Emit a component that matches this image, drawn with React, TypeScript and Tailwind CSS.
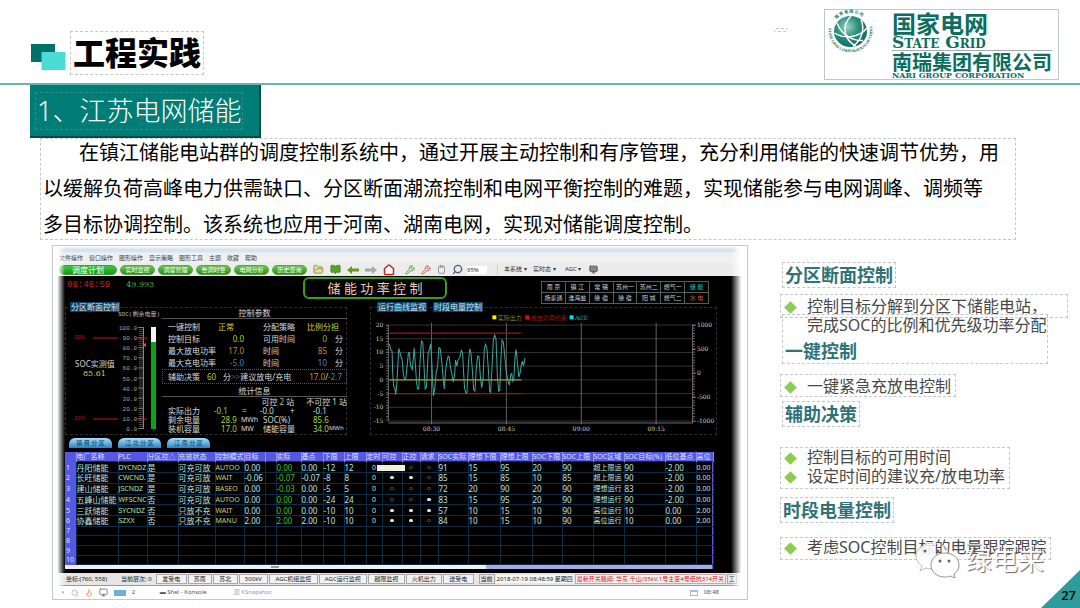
import type { ReactNode } from "react"
import { BookOpen, FolderOpen, House, Monitor, Search, Flame, Clipboard, Wrench } from "lucide-react"

const menuItems = ["文件操作", "窗口操作", "图形操作", "显示策略", "图形工具", "主题", "收藏", "帮助"]
const pills = ["实时监视", "调度管理", "告调时警", "电网分析", "历史查询"]

const stations = [
  ["南 京", "镇 江", "常 锡", "苏州一", "苏州二", "燃气一", "储 能"],
  ["扬泰通", "淮海盐", "徐 宿", "徐 宿", "阳 城", "燃气二", "水 电"],
]

const params = [
  { label: "一键控制", value: "正常", color: "text-[#c8d23c]", label2: "分配策略", value2: "比例分担", unit: "", color2: "text-[#c8d23c]" },
  { label: "控制目标", value: "0.0", color: "text-[#a8d23c]", label2: "可用时间", value2: "0", unit: "分", color2: "text-[#7cc832]" },
  { label: "最大放电功率", value: "17.0", color: "text-[#d8862c]", label2: "时间", value2: "85", unit: "分", color2: "text-[#d8862c]" },
  { label: "最大充电功率", value: "-5.0", color: "text-[#2f86d0]", label2: "时间", value2: "10", unit: "分", color2: "text-[#4a7ee0]" },
]

const columns = [
  { name: "", width: "w-[11px]" },
  { name: "电厂名称", width: "w-[42px]" },
  { name: "PLC", width: "w-[29px]" },
  { name: "分区控△", width: "w-[31px]" },
  { name: "充放状态", width: "w-[37px]" },
  { name: "控制模式", width: "w-[29px]" },
  { name: "目标", width: "w-[21px]" },
  { name: "", width: "w-[11px]" },
  { name: "实际", width: "w-[25px]" },
  { name: "基点", width: "w-[22px]" },
  { name: "下限", width: "w-[21px]" },
  { name: "上限", width: "w-[22px]" },
  { name: "定时", width: "w-[16px]" },
  { name: "可控", width: "w-[20px]" },
  { name: "正控", width: "w-[18px]" },
  { name: "请求", width: "w-[18px]" },
  { name: "SOC实际", width: "w-[30px]" },
  { name: "理想下限", width: "w-[32px]" },
  { name: "理想上限", width: "w-[32px]" },
  { name: "SOC下限", width: "w-[30px]" },
  { name: "SOC上限", width: "w-[31px]" },
  { name: "SOC区域", width: "w-[31px]" },
  { name: "SOC目标(%)", width: "w-[41px]" },
  { name: "低位基点", width: "w-[31px]" },
  { name: "高位", width: "w-[17px]" },
]

const plants = [
  ["丹阳储能", "DYCNDZ", "是", "可充可放", "AUTOO", "0.00", "", "0.00", "0.00", "-12", "12", "0", "○", "○", "○", "91", "15", "95", "20", "90", "超上限运", "90", "-2.00", "0.00"],
  ["长旺储能", "CWCND.", "是", "可充可放", "WAIT", "-0.06", "", "-0.07", "-0.07", "-8", "8", "0", "●", "●", "○", "85", "15", "85", "10", "85", "超上限运", "90", "-2.00", "0.00"],
  ["建山储能", "JSCNDZ", "是", "可充可放", "BASEO", "0.00", "", "-0.03", "0.00", "-5", "5", "0", "○", "○", "○", "72", "20", "90", "20", "90", "理想运行", "83", "-2.00", "0.00"],
  ["五峰山储能", "WFSCNC", "否", "可充可放", "AUTOO", "0.00", "", "0.00", "0.00", "-24", "24", "0", "○", "○", "●", "83", "15", "95", "20", "90", "理想运行", "90", "-2.00", "0.00"],
  ["三跃储能", "SYCNDZ", "否", "只放不充", "WAIT", "0.00", "", "0.00", "0.00", "-10", "10", "0", "●", "●", "●", "57", "10", "15", "10", "90", "高位运行", "10", "0.00", "2.00"],
  ["协鑫储能", "SZXX", "否", "只放不充", "MANU", "2.00", "", "2.00", "2.00", "-10", "10", "0", "●", "●", "○", "84", "10", "15", "10", "90", "高位运行", "10", "0.00", "2.00"],
]

const wave =
  "88,133 92,150 96,155 98,225 101,262 104,265 107,285 110,255 113,200 116,147 120,160 123,172 126,180 130,225 133,240 137,238 141,200 145,160 148,160 151,198 156,210 159,185 162,145 166,200 169,245 172,268 176,268 180,180 184,125 188,130 192,210 195,268 199,262 204,160 208,150 211,133 214,170 217,240 220,289 224,262 228,220 232,200 236,145 240,148 244,180 248,225 252,268 256,215 260,185 264,170 267,173 271,205 275,225 279,248 283,225 286,182 290,200 293,182 298,176 303,153 307,160 310,220 313,268 317,280 320,278 324,200 328,148 332,160 336,210 340,270 344,275 348,205 352,170 356,172 360,230 364,265 368,240 372,145 376,135 380,150 384,210 388,275 391,278 395,200 399,120 403,107 407,120 411,230 415,275 418,272 422,170 425,122 429,128 434,180 438,220 443,245 447,257 451,225 454,222 457,245 460,240 464,170 467,150 471,190 475,233 479,220 483,195 486,185 489,200 494,175"

const cellStyle = (col: number) => {
  if (col === 1) return "text-[7px] text-[#b4e6a4]"
  if (col === 4) return "text-[7px] text-[#dccb6c]"
  if (col === 7) return "text-[#3cc028]"
  if (col === 20 || col === 23) return "text-[7px] text-[#bfe4e0]"
  if (col >= 11 && col <= 14) return "text-center text-[7px] text-[#bfe4e0]"
  return "text-[#bfe4e0]"
}

function StateGridLogo() {
  return (
    <div className="flex h-[71px] w-[235px] gap-4 border border-[#c2c6d2] bg-white pl-px">
      <svg viewBox="0 0 50 50" className="-mt-1 size-[50px] shrink-0">
        <defs>
          <radialGradient id="globe" cx="0.4" cy="0.35" r="0.75">
            <stop offset="0" stopColor="#9fd3c6" />
            <stop offset="0.45" stopColor="#2b8f7f" />
            <stop offset="1" stopColor="#0b6459" />
          </radialGradient>
          <path id="arcTop" d="M8.500 15.500 A18.500 17.500 0 0 1 40.500 15.500" />
          <path id="arcBottom" d="M4 17 A22 21.500 0 1 0 45 17" />
        </defs>
        <ellipse cx="24.500" cy="25.500" rx="16.500" ry="15.500" fill="url(#globe)" />
        <g fill="none" stroke="#fff" strokeWidth="1.4">
          <path d="M8.500 27 C18 33 33 32 41 22" />
          <path d="M25 10 C15 20 18 34 30 40" />
          <path d="M11 17 C16 30 28 35 37 34.500" />
          <path d="M35 14 C39 22 36 34 27 40.500" />
        </g>
        <text fontSize="4" fontWeight="bold" fill="#0b6e60" fontFamily="Noto Sans CJK SC, sans-serif">
          <textPath href="#arcTop" startOffset="3">国 家 电 网 公 司</textPath>
        </text>
        <text fontSize="4" fontWeight="bold" fill="#0b6e60" fontFamily="Liberation Serif, serif">
          <textPath href="#arcBottom" startOffset="5">STATE GRID CORPORATION OF CHINA</textPath>
        </text>
      </svg>
      <div className="flex flex-col text-[#0b6e60]">
        <span className="mt-0.5 text-[24px] leading-[24px] font-bold">国家电网</span>
        <span className="font-['DejaVu_Serif',serif] text-[17px] leading-[13px] font-bold [font-variant:small-caps]">State Grid</span>
        <span className="mb-[3px] h-0.5 border-b border-[#a8acb0]" />
        <span className="text-[20px] leading-[18px] font-bold">南瑞集团有限公司</span>
        <span className="font-['DejaVu_Serif',serif] text-[8px] leading-[6px] font-bold whitespace-nowrap">NARI GROUP CORPORATION</span>
      </div>
    </div>
  )
}

function SocGauge() {
  const ticks = Array.from({ length: 11 }, (_, i) => i)
  return (
    <svg viewBox="0 0 96 124" className="h-[124px] w-24 shrink-0" fontFamily="Noto Sans, Noto Sans CJK SC, sans-serif">
      <text x="52" y="8" fontSize="6" fill="#b4b4b4" fontFamily="Liberation Mono, Noto Sans CJK SC">SOC(剩余电量)</text>
      {ticks.map((t) => (
        <g key={t}>
          <text x="71" y={22 + t * 10.1} fontSize="6" textAnchor="end" fill="#a6a6a6" fontFamily="Liberation Mono">
            {(100 - t * 10).toFixed(1)}
          </text>
          <path d={`M72 ${19.5 + t * 10.1}h5`} stroke="#aaa" strokeWidth="0.7" />
        </g>
      ))}
      {Array.from({ length: 51 }, (_, i) => (
        <path key={i} d={`M73 ${19.5 + i * 2.02}h4`} stroke="#777" strokeWidth="0.6" />
      ))}
      <path d="M77.500 19v102" stroke="#aaa" strokeWidth="0.8" />
      <g stroke="#c01818" strokeWidth="1">
        <path d="M27 30h25M71 30h10M27 111h25M71 111h10" />
      </g>
      <path d="M80 35l-4 2 4 2z" fill="#e0502c" />
      <text x="8" y="31" fontSize="6" fill="#b01414" fontFamily="Liberation Mono">90%</text>
      <text x="8" y="112" fontSize="6" fill="#b01414" fontFamily="Liberation Mono">10%</text>
      <rect x="85" y="19" width="5" height="15" fill="#f4f4f4" />
      <rect x="85" y="34" width="5" height="87" fill="#0aa414" />
      <text x="9" y="59" fontSize="8" fill="#d0d4d4">SOC实测值</text>
      <text x="17" y="68" fontSize="8" fill="#b8d860" fontFamily="DejaVu Serif">85.61</text>
    </svg>
  )
}

function PowerChart() {
  const left = [20, 15, 10, 5, 0, -5, -10, -15]
  const right = [1000, 500, 0, -500, -1000]
  const times = ["08:30", "08:45", "09:00", "09:15"]
  return (
    <svg viewBox="33 38 1032 366" className="w-full" fontFamily="DejaVu Serif, Noto Sans CJK SC, serif" fontSize="18">
      <rect x="396" y="48" width="12" height="12" fill="#ffee00" />
      <text x="412" y="61" fontSize="18" fill="#8c8420">实际出力</text>
      <rect x="494" y="48" width="12" height="12" fill="#f00000" />
      <text x="511" y="61" fontSize="18" fill="#981818">充放功率约束</text>
      <rect x="627" y="48" width="12" height="12" fill="#00e4f0" />
      <text x="643" y="61" fill="#00ccd8">ACE</text>
      {left.map((v, i) => (
        <g key={v}>
          <path d={`M76 ${77 + i * 41}H995`} stroke="#4c4c4c" strokeWidth="2" />
          <text x="70" y={83 + i * 41} textAnchor="end" fill="#d0d0d0">{v}</text>
        </g>
      ))}
      {times.map((t, i) => (
        <g key={t}>
          <path d={`M${214 + i * 224} 70V374`} stroke="#606060" strokeWidth="3" />
          <text x={214 + i * 224} y="394" textAnchor="middle" fill="#d0d0d0">{t}</text>
        </g>
      ))}
      {right.map((v, i) => (
        <g key={v}>
          <path d={`M995 ${77 + i * 72}h10`} stroke="#aaa" strokeWidth="2" />
          <text x="1008" y={83 + i * 72} fill="#d0d0d0">{v}</text>
        </g>
      ))}
      <path d="M85 77V364M995 77V370M85 370H995" stroke="#a0a0a0" strokeWidth="2" fill="none" />
      <path d="M81 77V364M999 77V364" stroke="#a0a0a0" strokeWidth="5" strokeDasharray="2 6" />
      <path d="M88 101H483M88 282H483" stroke="#9c1616" strokeWidth="4" />
      <polyline points={wave} fill="none" stroke="#3aa8a0" strokeWidth="3" />
      <path d="M88 241H483" stroke="#a0a020" strokeWidth="4" />
    </svg>
  )
}

function PanelTag({ children }: { children: ReactNode }) {
  return <span className="bg-[#0c4468] px-px text-[8px] leading-[10px] text-[#d8e8f0]">{children}</span>
}

function Parameters() {
  return (
    <div className="flex flex-1 flex-col pr-1.5 text-[8px] whitespace-nowrap text-[#d4dcdc]">
      <h3 className="border-b border-[#555] text-center leading-[10px]">控制参数</h3>
      <div className="pt-0.5 pl-1.5">
        {params.map((p) => (
          <div key={p.label} className="flex leading-3">
            <span className="w-[50px]">{p.label}</span>
            <span className={`w-[26px] ${p.unit ? "text-right" : ""} ${p.color}`}>{p.value}</span>
            <span className="ml-[19px] w-[44px]">{p.label2}</span>
            <span className={`${p.unit ? "w-5 text-right" : ""} ${p.color2}`}>{p.value2}</span>
            <span className="ml-2">{p.unit}</span>
          </div>
        ))}
      </div>
      <div className="flex border border-dotted border-[#555] pr-1 pl-[5px] leading-[13px]">
        <span className="w-[39px]">辅助决策</span>
        <span className="w-4 text-[#a8d23c]">60</span>
        <span>分<b className="font-normal text-[#2f66b0]">&gt;&gt;</b>建议放电/充电</span>
        <span className="ml-auto text-[#d8862c]">17.0<b className="font-normal text-[#d4dcdc]">/</b><b className="font-normal text-[#2f86d0]">-2.7</b></span>
      </div>
      <h3 className="mt-0.5 border-b border-[#555] text-center leading-[10px]">统计信息</h3>
      <div className="pl-1.5 leading-[9px]">
        <div className="flex justify-end gap-3">
          <span>可控 <b className="font-normal text-[#a8d23c]">2</b> 站</span>
          <span>不可控 1 站</span>
        </div>
        <div className="flex">
          <span className="w-[46px]">实际出力</span>
          <span className="w-[28px] text-[#a8d23c]">-0.1</span>
          <span className="w-[18px]">=</span>
          <span className="w-[30px] text-[#b8e0d0]">-0.0</span>
          <span className="w-[23px]">+</span>
          <span className="text-[#b8e0d0]">-0.1</span>
        </div>
        <div className="flex">
          <span className="w-[53px]">剩余电量</span>
          <span className="w-5 text-[#a8d23c]">28.9</span>
          <span className="w-[22px] text-[7px]">MWh</span>
          <span className="w-[50px]">SOC(%)</span>
          <span className="text-[#a8d23c]">85.6</span>
        </div>
        <div className="flex">
          <span className="w-[53px]">装机容量</span>
          <span className="w-5 text-[#a8d23c]">17.0</span>
          <span className="w-[22px] text-[7px]">MW</span>
          <span className="w-[50px]">储能容量</span>
          <span className="text-[#a8d23c]">34.0</span>
          <span className="text-[6px]">MWh</span>
        </div>
      </div>
    </div>
  )
}

function PlantTable() {
  return (
    <div className="relative mr-1 border-r border-[#5a5ae0]">
      <table className="h-[113px] w-full table-fixed border-collapse text-[8px] leading-[9px] whitespace-nowrap">
        <thead>
          <tr className="bg-[#5458e4] text-[7px] text-[#dfe4ff]">
            {columns.map((c, i) => (
              <th key={i} className={`border-r border-[#8a8cf4] p-0 text-left font-normal ${c.width}`}>{c.name}</th>
            ))}
          </tr>
        </thead>
        <tbody>
          {Array.from({ length: 10 }, (_, row) => (
            <tr key={row}>
              <td className="bg-[#5458e4] p-0 pl-px text-[7px] text-[#dfe4ff]">{row + 1}</td>
              {columns.slice(1).map((_, col) => (
                <td key={col} className={`border border-[#0d2c44] p-0 ${cellStyle(col)}`}>
                  {plants[row]?.[col] === "●" || plants[row]?.[col] === "○" ? (
                    <i className={`mx-auto block h-[3px] w-1 rounded-full ${plants[row][col] === "●" ? "bg-[#c8f4ec]" : "border border-[#555]"}`} />
                  ) : (
                    plants[row]?.[col]
                  )}
                </td>
              ))}
            </tr>
          ))}
        </tbody>
      </table>
      <div className="absolute top-[13px] left-[312px] h-1.5 w-7 bg-[#eef2d8]" />
      <div className="flex h-1 bg-[#a8aae4]">
        <div className="flex w-[65%] items-center justify-center bg-[#f0f0f4]">
          <span className="h-0.5 w-2 bg-[#999]" />
        </div>
      </div>
    </div>
  )
}

function Toolbar() {
  return (
    <div className="flex h-[13px] items-center overflow-hidden bg-[#ececec] pl-1.5 text-[6px] whitespace-nowrap text-[#333]">
      <button className="h-[10px] w-[58px] rounded-full border border-[#4a9a34] bg-linear-to-b from-[#3cc83c] to-[#109a1c] text-[8px] leading-[8px] text-white">调度计划</button>
      {pills.map((p) => (
        <button key={p} className="ml-[3px] h-[10px] w-[35px] rounded-full border border-[#58a840] bg-linear-to-b from-[#6cc850] to-[#2c8c20] text-[6px] leading-[8px] text-white">{p}</button>
      ))}
      <div className="ml-1.5 flex items-center gap-1.5">
        <FolderOpen size={11} className="fill-[#e8dca0] text-[#8a9448]" />
        <BookOpen size={11} className="fill-[#54a030] text-[#4c8c2c]" />
        <svg viewBox="0 0 12 10" className="h-2.5 w-3"><path d="M0 5l5-4v2.500h7v3H5V9z" fill="#6a9a1c" /></svg>
        <svg viewBox="0 0 12 10" className="h-2.5 w-3"><path d="M12 5L7 1v2.500H0v3h7V9z" fill="#a4a8a8" /></svg>
        <House size={12} className="fill-white text-[#c02424]" strokeWidth={3} />
      </div>
      <div className="ml-2.5 flex items-center gap-1.5">
        <Wrench size={10} className="text-[#4c8c3c]" />
        <Wrench size={10} className="text-[#b04c4c]" />
        <Clipboard size={9} className="text-[#777]" />
        <Search size={11} className="-scale-x-100 text-[#50607c]" strokeWidth={3} />
      </div>
      <select aria-label="缩放" className="ml-1 h-2 w-5 appearance-none bg-white text-[6px] leading-[8px]"><option>95%</option></select>
      <span className="ml-2.5 h-2.5 border-l border-[#ccc]" />
      <select aria-label="系统" className="ml-1.5 h-2.5 w-7 appearance-none text-[6px]"><option>本系统 ▾</option></select>
      <select aria-label="状态" className="ml-px h-2.5 w-7 appearance-none text-[6px]"><option>实时态 ▾</option></select>
      <select aria-label="应用" className="ml-1 h-2.5 w-6 appearance-none text-[6px]"><option>AGC ▾</option></select>
      <Monitor size={9} className="fill-[#888] text-[#444]" />
    </div>
  )
}

function StatusBar() {
  const buttons = ["发受电", "苏南", "苏北", "500kV", "AGC机组监控", "AGC运行监视", "越限监视", "火机出力", "送受电"]
  return (
    <div className="flex h-[13px] items-center gap-px overflow-hidden border-b border-[#7f9fb4] bg-[#e6e6e6] pr-2.5 pl-[13px] text-[6px] leading-[8px] whitespace-nowrap text-[#222]">
      <span className="w-[54px]">坐标:(760, 558)</span>
      <span className="w-[34px]">当前层次: 0</span>
      {buttons.map((b) => (
        <button key={b} className="min-w-[22px] grow border border-[#aaa] bg-[#f2f2f2] leading-[8px]">{b}</button>
      ))}
      <span className="ml-1 border border-[#aaa] px-px">当前</span>
      <span className="shrink-0 bg-[#f6f6f6] px-px">2018-07-19 08:48:59 星期四</span>
      <span className="shrink-0 border border-[#c8a8a8] bg-[#f8f0f0] px-px text-[#d02020]">最新开关跳闸: 华东.千山/35kV.1号主变4号低抗314开关</span>
      <button className="w-2.5 shrink-0 border border-[#aaa] leading-[8px]">工</button>
    </div>
  )
}

function ControlScreen() {
  return (
    <section className="relative min-w-0 flex-1 overflow-hidden border border-[#c4c8d4] bg-white">
      <div className="h-2 bg-linear-to-b from-white via-[#cfe0ee] to-[#eef2f4]" />
      <nav className="flex h-[9px] gap-1.5 bg-[#f0f0f0] pl-1.5 text-[6px] leading-[8px] text-[#444]">
        {menuItems.map((m) => <span key={m}>{m}</span>)}
      </nav>
      <Toolbar />
      <div className="bg-black pr-[30px] pb-1 pl-3">
        <div className="flex h-[26px] items-start pt-px">
          <div className="flex w-[238px] gap-4 pt-0.5 pl-0.5 leading-3">
            <span className="font-['Liberation_Mono',monospace] text-[9px] text-[#d01c1c]">08:48:59</span>
            <span className="font-['DejaVu_Serif',serif] text-[8px] text-[#44b43c]">49.993</span>
          </div>
          <h2 className="h-[22px] w-[144px] rounded-md border-2 border-[#3c9c1c] text-center text-[13px] leading-[18px] text-[#e8ccb8]">储 能 功 率 控 制</h2>
          <table className="mt-1 mr-2 ml-auto w-[168px] table-fixed border-collapse text-center text-[6px] leading-[10px] whitespace-nowrap text-[#ccd4d0]">
            <tbody>
              {stations.map((row, i) => (
                <tr key={i}>
                  {row.map((s, j) => (
                    <td key={j} className={`border border-[#4c6458] p-0 ${j === 6 ? (i === 0 ? "text-[#20c8c8]" : "text-[#d05020]") : ""}`}>{s}</td>
                  ))}
                </tr>
              ))}
            </tbody>
          </table>
        </div>
        <div className="flex gap-[23px] pt-[5px]">
          <div className="relative flex w-[282px] border border-dashed border-[#2c2c2c]">
            <div className="absolute -top-1.5 left-1 flex"><PanelTag>分区断面控制</PanelTag></div>
            <SocGauge />
            <Parameters />
          </div>
          <div className="relative flex-1 border border-dashed border-[#2c2c2c] pt-1">
            <div className="absolute -top-1.5 left-1.5 flex gap-1.5"><PanelTag>运行曲线监视</PanelTag><PanelTag>时段电量控制</PanelTag></div>
            <PowerChart />
          </div>
        </div>
        <div className="flex gap-1.5 pt-[3px] pb-1 pl-1">
          {["镇 晋 分 区", "江 北 分 区", "江 南 分 区"].map((t) => (
            <button key={t} className="h-[10px] w-[43px] rounded-t-md bg-linear-to-b from-[#a8e0f8] to-[#1c84c4] text-[6px] leading-[10px] text-[#0c3c68]">{t}</button>
          ))}
        </div>
        <PlantTable />
      </div>
      <StatusBar />
      <div className="flex h-[13px] items-center gap-1.5 pr-7 pl-2 text-[6px] text-[#555]">
        <span className="text-[#4c7cd0]">◖</span>
        <Search size={8} className="text-[#7cb0d8]" />
        <Flame size={8} className="text-[#f07030]" />
        <Monitor size={9} className="text-[#666]" />
        <span className="h-1.5 w-3 bg-[#6cb0d4]" />
        <span className="w-[22px]">2</span>
        <span className="w-[68px]">▬ Shel - Konsole</span>
        <span className="text-[#999]">▨ KSnapshot</span>
        <span className="ml-auto h-1.5 w-2 border border-t-2 border-[#9cc0dc]" />
        <span>08:48</span>
      </div>
      <div className="pointer-events-none absolute inset-y-0 left-0 w-3 bg-linear-to-r from-white from-35% to-transparent" />
      <div className="pointer-events-none absolute inset-y-0 right-0 w-4 bg-linear-to-l from-white from-35% to-transparent" />
    </section>
  )
}

const frame = "w-fit border border-dashed border-[#c4c8d0]"
const heading = "text-[18px] leading-[24px] font-bold text-[#2f7278]"

function Bullet({ children }: { children: ReactNode }) {
  return (
    <li className="flex gap-[11px]">
      <span className="mt-1 ml-[3px] flex size-3 shrink-0 items-center justify-center">
        <span className="size-[9px] rotate-45 bg-[#8ccc50]" />
      </span>
      <span>{children}</span>
    </li>
  )
}

function Features() {
  return (
    <aside className="w-[288px] shrink-0 pt-[17px] text-[16px] leading-[19px] whitespace-nowrap text-[#484848]">
      <div className={`ml-0.5 px-0.5 ${frame}`}><h2 className={heading}>分区断面控制</h2></div>
      <ul className="mt-1.5 h-6 border border-dashed border-[#c4c8d0] pt-0.5">
        <Bullet>控制目标分解到分区下储能电站，<br />完成SOC的比例和优先级功率分配</Bullet>
      </ul>
      <div className="-mt-1 mr-5 ml-0.5 flex h-[50px] items-end border border-dashed border-[#c4c8d0] px-0.5"><h2 className={heading}>一键控制</h2></div>
      <ul className={`mt-2.5 pt-0.5 pr-1 ${frame}`}>
        <Bullet>一键紧急充放电控制</Bullet>
      </ul>
      <div className={`mt-1 ml-0.5 px-0.5 ${frame}`}><h2 className={heading}>辅助决策</h2></div>
      <ul className={`mt-5 pr-1 pb-0.5 ${frame}`}>
        <Bullet>控制目标的可用时间</Bullet>
        <Bullet>设定时间的建议充/放电功率</Bullet>
      </ul>
      <div className={`mt-2 px-0.5 ${frame}`}><h2 className={heading}>时段电量控制</h2></div>
      <div className="relative mt-3.5 w-fit">
        <ul className={`pr-1 pb-0.5 ${frame}`}>
          <Bullet>考虑SOC控制目标的电量跟踪跟踪</Bullet>
        </ul>
        <div className="absolute top-1 left-[134px] flex items-center gap-1">
          <svg viewBox="0 0 48 38" className="h-[38px] w-12">
            <path d="M19 2C9 2 2 8 2 15c0 4 3 8 6 10l-2 5 6-3c3 1 7 1 10 0" fill="#fff" fillOpacity="0.85" stroke="#aaa" strokeWidth="0.8" />
            <path d="M19 2c8 0 15 5 16 12" fill="none" stroke="#ddd" strokeWidth="0.8" />
            <path d="M31 12c-8 0-14 5-14 12s6 12 14 12c2 0 3 0 5-1l5 2-1-4c3-2 5-5 5-9 0-7-6-12-14-12z" fill="#fff" stroke="#888" strokeWidth="0.9" />
            <g fill="#666"><circle cx="11" cy="10" r="1.500" /><circle cx="24" cy="10" r="1.500" /><circle cx="26" cy="20" r="1.500" /><circle cx="35" cy="20" r="1.500" /></g>
          </svg>
          <span className="text-[26px] leading-[32px] text-white [text-shadow:1px_1px_1px_#666]">绿电来</span>
        </div>
      </div>
    </aside>
  )
}

export default function App() {
  return (
    <div className="relative min-h-screen overflow-hidden bg-white font-['Noto_Sans','Noto_Sans_CJK_SC',sans-serif] text-black">
      <header className="flex h-[85px] items-start border-b-2 border-[#6cb4b0] pr-[21px] pl-[31px]">
        <svg viewBox="0 0 35 27" className="mt-11 h-[27px] w-[35px]">
          <rect width="24" height="18" fill="#00706a" />
          <rect x="10.500" y="8" width="24" height="18" fill="#48dcd4" />
        </svg>
        <h1 className="mt-[31px] ml-1 border border-dashed border-[#c4c8d0] px-0.5 text-[32px] leading-[42px] font-black">工程实践</h1>
        <span className="mt-7 mr-9 ml-auto h-1 w-3.5 rounded-sm border border-dashed border-[#c4c8d0]" />
        <div className="mt-[9px]"><StateGridLogo /></div>
      </header>

      <div className="ml-[30px] flex h-[53px] w-fit items-center border-r-2 border-b-2 border-[#0c4844] bg-[#007d76] pr-4 pl-[5px]">
        <h2 className="border border-dashed border-[#2c8c88] px-px text-[27px] leading-[36px] font-light text-white">1、江苏电网储能</h2>
      </div>

      <div className="mr-16 ml-10 border border-dashed border-[#c4c8d0] px-0.5">
        <p className="-my-1 text-[20px] leading-9">
          <span className="inline-block w-9" />在镇江储能电站群的调度控制系统中，通过开展主动控制和有序管理，充分利用储能的快速调节优势，用<br />
          以缓解负荷高峰电力供需缺口、分区断面潮流控制和电网平衡控制的难题，实现储能参与电网调峰、调频等<br />
          多目标协调控制。该系统也应用于河南、湖南电网，实现对储能调度控制。
        </p>
      </div>

      <main className="flex items-start gap-8 pt-[5px] pr-3 pl-[52px]">
        <ControlScreen />
        <Features />
      </main>

      <footer className="absolute right-0 bottom-0 flex h-[38px] w-[39px] items-end justify-end bg-[#2f9c9c] pr-1 pb-1 text-[13px] leading-[18px] font-medium [clip-path:polygon(100%_0,100%_100%,0_100%)]">27</footer>
    </div>
  )
}
